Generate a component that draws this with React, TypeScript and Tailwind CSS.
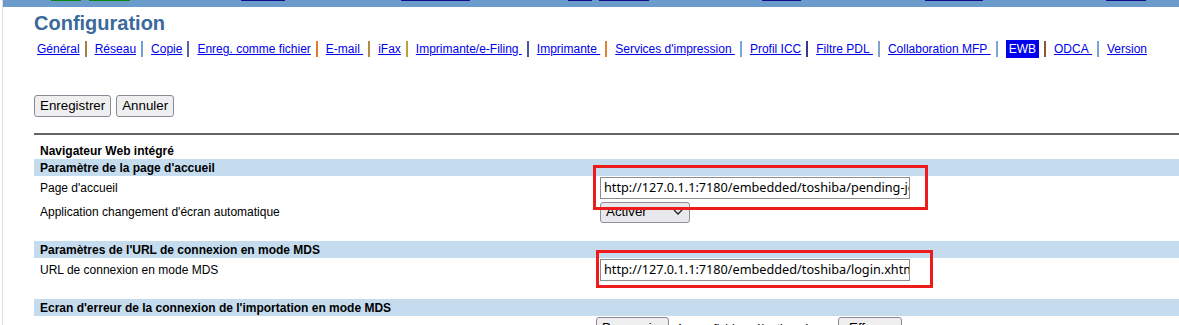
import React from "react";

type NavItem = { label: string; sep?: string; active?: boolean };

const nav: NavItem[] = [
  { label: "Général", sep: "#a67c48" },
  { label: "Réseau", sep: "#6ea2d6" },
  { label: "Copie", sep: "#5a64a8" },
  { label: "Enreg. comme fichier", sep: "#e07a34" },
  { label: "E-mail\u00a0", sep: "#b08a44" },
  { label: "iFax", sep: "#c0a03c" },
  { label: "Imprimante/e-Filing\u00a0", sep: "#4a56a6" },
  { label: "Imprimante\u00a0", sep: "#e08434" },
  { label: "Services d'impression\u00a0", sep: "#72a8e0" },
  { label: "Profil ICC", sep: "#3a3a88" },
  { label: "Filtre PDL\u00a0", sep: "#7ea4cc" },
  { label: "Collaboration MFP\u00a0", sep: "#80a6d4" },
  { label: "EWB", sep: "#8e5636", active: true },
  { label: "ODCA\u00a0", sep: "#72a4e0" },
  { label: "Version" },
];

const segs: { l: number; w: number; c: string }[] = [
  { l: 48, w: 30, c: "bg-[#0a8a0a]" },
  { l: 86, w: 41, c: "bg-[#0a8a0a]" },
  { l: 238, w: 44, c: "bg-[#0e0e8c]" },
  { l: 398, w: 69, c: "bg-[#0e0e8c]" },
  { l: 565, w: 24, c: "bg-[#0e0e8c]" },
  { l: 596, w: 50, c: "bg-[#0e0e8c]" },
  { l: 759, w: 39, c: "bg-[#0e0e8c]" },
  { l: 922, w: 58, c: "bg-[#0e0e8c]" },
  { l: 1103, w: 40, c: "bg-[#0e0e8c]" },
];

function Btn({ children, className = "" }: { children: React.ReactNode; className?: string }) {
  return (
    <button
      className={
        "h-[22px] px-[5px] border border-[#8a8a96] rounded-[3px] bg-[#efeff0] text-[13.33px] leading-[18px] text-black whitespace-nowrap " +
        className
      }
      style={{ fontFamily: '"Liberation Sans", Arial, sans-serif' }}
    >
      {children}
    </button>
  );
}

function Header({ children }: { children: React.ReactNode }) {
  return (
    <div className="h-[17px] bg-[#c5dcef] pl-[6px] flex items-center font-bold text-[12px]">
      {children}
    </div>
  );
}

function Row({ label, children }: { label: string; children?: React.ReactNode }) {
  return (
    <div className="h-[24px] grid grid-cols-[566px_1fr] items-center text-[12px]">
      <div className="pl-[6px]">{label}</div>
      <div className="flex items-center">{children}</div>
    </div>
  );
}

function UrlInput({ value }: { value: string }) {
  return (
    <div
      className="w-[310px] h-[22px] border border-[#8d8d8d] bg-white overflow-hidden whitespace-nowrap pl-[3px] flex items-center text-[12.7px] text-black"
      style={{ fontFamily: '"Noto Sans", "Open Sans", sans-serif' }}
    >
      {value}
    </div>
  );
}

export default function App() {
  return (
    <div
      className="relative w-[1179px] h-[325px] overflow-hidden bg-white pl-[2px] text-black"
      style={{ fontFamily: '"Liberation Sans", Arial, sans-serif' }}
    >
      <div className="h-full border-l border-[#dcdcdc]">
        <div className="relative h-[7px] bg-[#6a9bcb]">
          {segs.map((s, i) => (
            <div
              key={i}
              className={"absolute top-0 h-[1px] " + s.c}
              style={{ left: s.l, width: s.w }}
            />
          ))}
        </div>
        <div className="pl-[31px]">
          <h1 className="pt-[5px] text-[20px] leading-[23px] font-bold text-[#3a6a9a]">
            Configuration
          </h1>
          <nav className="mt-[5px] h-[18px] pl-[3px] flex items-center text-[12px] whitespace-nowrap">
            {nav.map((n, i) => (
              <React.Fragment key={i}>
                {n.active ? (
                  <span className="h-[18px] px-[3px] bg-[#0000f0] text-white flex items-center">
                    {n.label}
                  </span>
                ) : (
                  <a className="text-[#0000ee] underline leading-[14px]" href="#">
                    {n.label}
                  </a>
                )}
                {n.sep && (
                  <span
                    className="ml-[5px] mr-[8px] w-[2px] h-[16px]"
                    style={{ backgroundColor: n.sep }}
                  />
                )}
              </React.Fragment>
            ))}
          </nav>
          <div className="mt-[37px] flex gap-[5px]">
            <Btn>Enregistrer</Btn>
            <Btn>Annuler</Btn>
          </div>
          <div className="mt-[16px] h-[2px] bg-[#666666]" />
          <div className="mt-[7px]">
            <div className="h-[17px] pl-[6px] flex items-center font-bold text-[12px]">
              Navigateur Web intégré
            </div>
            <Header>Paramètre de la page d'accueil</Header>
            <Row label="Page d'accueil">
              <UrlInput value="http://127.0.1.1:7180/embedded/toshiba/pending-jobs.xhtml" />
            </Row>
            <Row label="Application changement d'écran automatique">
              <div className="w-[90px] h-[21px] border border-[#8f8f9d] rounded-[3px] bg-[#e9e9ed] flex items-center justify-between pl-[5px] pr-[6px] text-[13.33px]">
                <span>Activer</span>
                <svg width="10" height="6" viewBox="0 0 10 6">
                  <path d="M1 1 L5 5 L9 1" fill="none" stroke="#222" strokeWidth="1.3" />
                </svg>
              </div>
            </Row>
            <div className="h-[17px]" />
            <Header>Paramètres de l'URL de connexion en mode MDS</Header>
            <Row label="URL de connexion en mode MDS">
              <UrlInput value="http://127.0.1.1:7180/embedded/toshiba/login.xhtml" />
            </Row>
            <div className="h-[17px]" />
            <Header>Ecran d'erreur de la connexion de l'importation en mode MDS</Header>
            <div className="grid grid-cols-[566px_1fr] text-[12px] pt-[1px]">
              <div />
              <div className="flex items-start -ml-[4px]">
                <Btn className="w-[73px]">Parcourir...</Btn>
                <span className="ml-[7px] mt-[3px] w-[162px] whitespace-nowrap">Aucun fichier sélectionné.</span>
                <Btn className="w-[64px]">Effacer</Btn>
              </div>
            </div>
          </div>
        </div>
      </div>
      <div className="absolute left-[593px] top-[165px] w-[335px] h-[45px] border-[3px] border-[#ec1c1c]" />
      <div className="absolute left-[596px] top-[250px] w-[337px] h-[38px] border-[3px] border-[#ec1c1c]" />
    </div>
  );
}
